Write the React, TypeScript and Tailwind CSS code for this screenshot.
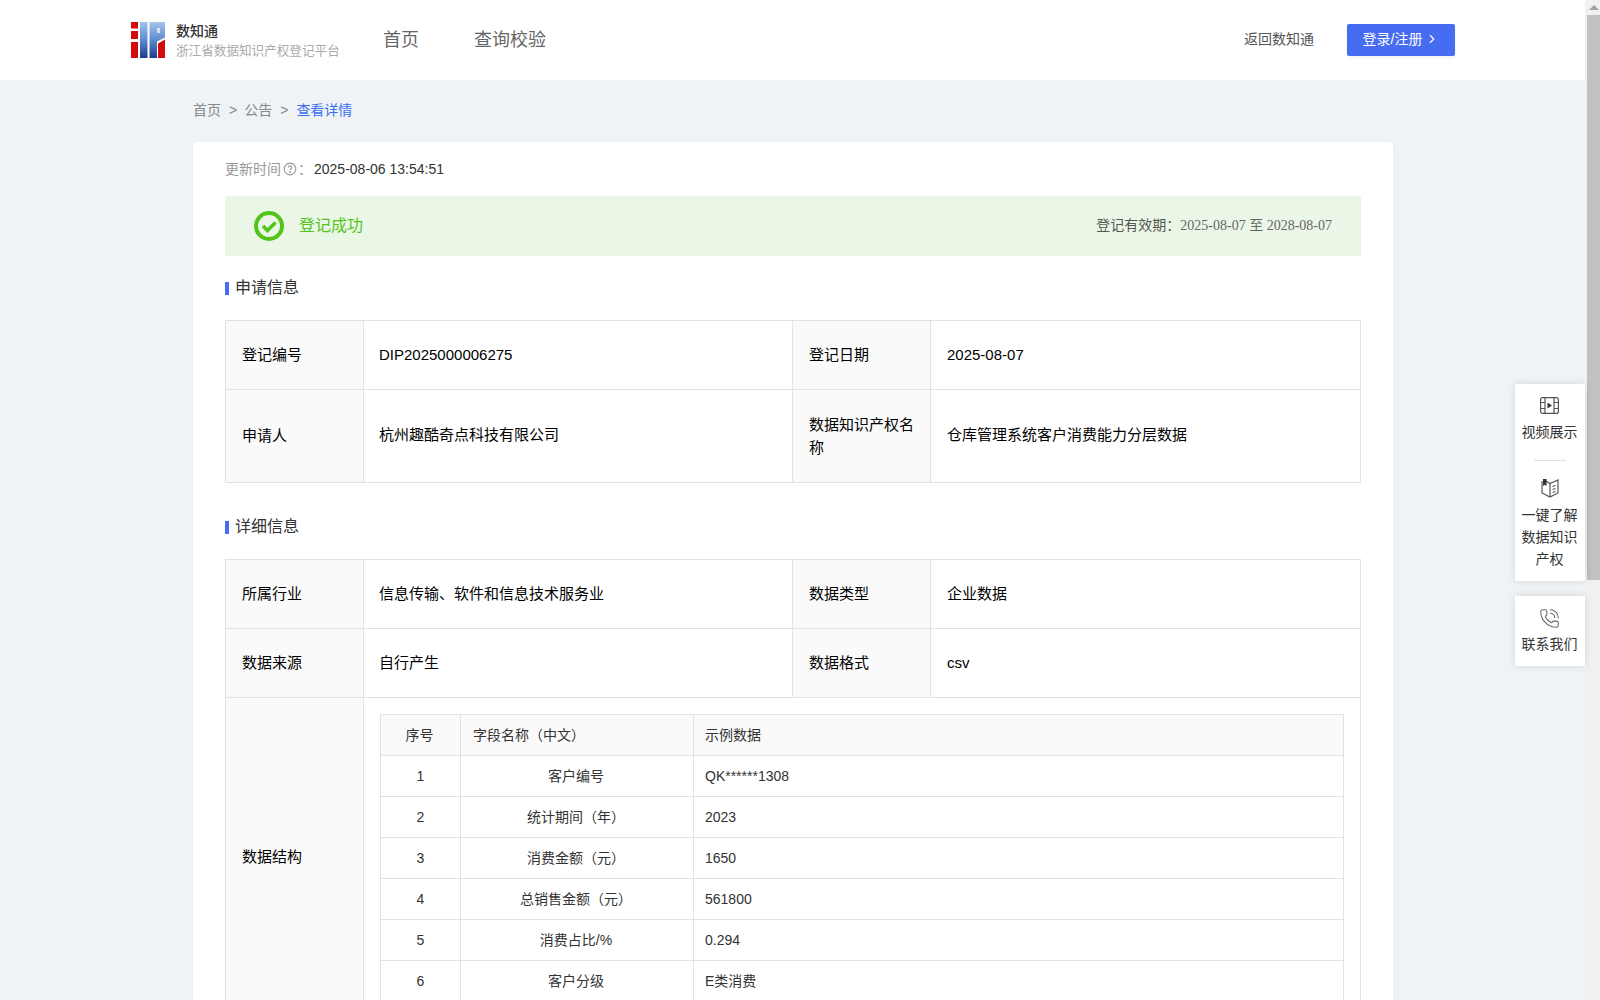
import { ChevronRight, PhoneCall } from 'lucide-react';

const fontStack = '[font-family:"Liberation_Sans","Noto_Sans_CJK_SC",sans-serif]';

const fields = [
  ['1', '客户编号', 'QK******1308'],
  ['2', '统计期间（年）', '2023'],
  ['3', '消费金额（元）', '1650'],
  ['4', '总销售金额（元）', '561800'],
  ['5', '消费占比/%', '0.294'],
  ['6', '客户分级', 'E类消费'],
];

function Logo() {
  return (
    <svg width="34" height="36" viewBox="0 0 34 36" className="shrink-0">
      <defs>
        <linearGradient id="logoBlue" x1="0" y1="0" x2="0" y2="36" gradientUnits="userSpaceOnUse">
          <stop offset="0" stopColor="#a5c4ea" />
          <stop offset="0.5" stopColor="#5f8bd0" />
          <stop offset="1" stopColor="#1d3a8c" />
        </linearGradient>
      </defs>
      <rect x="0" y="0" width="7" height="6.500" fill="#d40b0b" />
      <rect x="0" y="9" width="7" height="8" fill="#d40b0b" />
      <rect x="0" y="20" width="7" height="16" fill="#d40b0b" />
      <rect x="9" y="0" width="7.500" height="36" fill="url(#logoBlue)" />
      <path d="M18.500 0H34V15.500L26 19.500V36H18.500z" fill="url(#logoBlue)" />
      <rect x="26" y="6" width="3" height="5" fill="#d6e4f6" />
      <path d="M27 36V21.500L34 17.500V36z" fill="#d40b0b" />
    </svg>
  );
}

function SectionTitle({ text }: { text: string }) {
  return (
    <div className="flex items-center h-5 text-base text-[#333]">
      <span className="w-1 h-[13px] bg-[#466df1] mr-[6px] mt-[3px]" />
      <span className="pt-[2px]">{text}</span>
    </div>
  );
}

function Row({ cells, h, value = '' }: { cells: string[]; h: string; value?: string }) {
  return (
    <div className={`grid grid-cols-[137px_429px_138px_1fr] border-b border-[#e2e2e2] text-[15px] text-black ${h}`}>
      <div className="flex items-center bg-[#fafafa] pl-4 pr-3 pb-px leading-[23px]">{cells[0]}</div>
      <div className={`flex items-center border-l border-[#e2e2e2] pl-[15px] ${value}`}>{cells[1]}</div>
      <div className="flex items-center bg-[#fafafa] border-l border-[#e2e2e2] pl-4 pr-3 pb-px leading-[23px]">{cells[2]}</div>
      <div className={`flex items-center border-l border-[#e2e2e2] pl-4 ${value}`}>{cells[3]}</div>
    </div>
  );
}

function Side() {
  return (
    <div className="absolute right-[15px] top-[384px] w-[70px] flex flex-col gap-[15px] text-sm text-[#333]">
      <div className="bg-white shadow-[0_0_8px_rgba(0,0,0,0.12)] flex flex-col items-center pt-[13px] pb-[11px] pr-px">
        <svg width="19" height="17" viewBox="0 0 19 17" fill="none" stroke="#555" strokeWidth="1.2">
          <rect x="0.600" y="0.600" width="17.800" height="15.800" rx="2" />
          <path d="M5 1v15M14 1v15M1 5.500h4M1 11.500h4M14 5.500h4M14 11.500h4" />
          <path d="M7.500 5.500l4.500 3-4.500 3z" fill="#333" stroke="none" />
        </svg>
        <div className="mt-[7px] leading-[22px]">视频展示</div>
        <div className="w-8 h-px bg-[#e2e2e2] mt-[17px] mb-[17px]" />
        <svg width="20" height="20" viewBox="0 0 20 20" fill="none" stroke="#555" strokeWidth="1.2">
          <path d="M2 3v12l8 4 8-4V2l-8 3.500L4 2" />
          <path d="M10 5.500V19M12.500 8.500l3-1M12.500 11.500l3-1M12.500 14.500l3-1" />
          <path d="M3 1h3.500v7L4.800 6.800 3 8z" fill="#333" stroke="none" />
        </svg>
        <div className="mt-[6px] leading-[22px] text-center px-[6px]">一键了解数据知识产权</div>
      </div>
      <div className="bg-white shadow-[0_0_8px_rgba(0,0,0,0.12)] flex flex-col items-center pt-[12px] pb-[11px] pr-px">
        <PhoneCall size={21} strokeWidth={1.2} color="#666" />
        <div className="mt-[4px] leading-[22px]">联系我们</div>
      </div>
    </div>
  );
}

export default function App() {
  return (
    <div className={`relative flex h-screen overflow-hidden bg-[#eff3f6] ${fontStack}`}>
      <div className="w-[1585px] shrink-0 overflow-hidden">
        <header className="h-20 bg-white flex items-center pl-[131px] pr-[130px]">
          <Logo />
          <div className="ml-[11px] w-[190px]">
            <div className="text-sm font-medium text-[#333] leading-5">数知通</div>
            <div className="text-[12.600px] text-[#aaa] leading-[18px] mt-px">浙江省数据知识产权登记平台</div>
          </div>
          <nav className="flex gap-[55px] text-lg text-[#666] ml-[17px]">
            <span>首页</span>
            <span>查询校验</span>
          </nav>
          <div className="ml-auto flex items-center gap-[33px]">
            <span className="text-sm text-[#555] pb-[2px]">返回数知通</span>
            <button className="w-[108px] h-8 rounded-[2px] bg-[#466df1] text-white text-sm pb-[2px] flex items-center justify-center gap-[3px] shadow-[0_2px_4px_rgba(0,0,0,0.06)]">
              登录/注册 <ChevronRight size={14} />
            </button>
          </div>
        </header>

        <main className="w-[1200px] ml-[193px]">
          <div className="h-[62px] flex items-center gap-[8px] text-sm text-[#888] pb-[2px]">
            <span>首页</span>
            <span className="-mr-px">&gt;</span>
            <span>公告</span>
            <span>&gt;</span>
            <span className="text-[#3b6ff2]">查看详情</span>
          </div>

          <div className="bg-white rounded-[4px] px-8 pt-[17px] pb-8">
            <div className="h-5 flex items-center text-sm text-[#999]">
              更新时间
              <svg width="14" height="14" viewBox="0 0 14 14" fill="none" stroke="#999" className="ml-[2px]">
                <circle cx="7" cy="7" r="5.800" strokeWidth="1.2" />
                <path d="M5.300 5.500c0-2.200 3.500-2.200 3.500 0 0 1.300-1.700 1.300-1.700 2.600" strokeWidth="1.100" />
                <circle cx="7" cy="10" r="0.500" fill="#999" />
              </svg>
              <span className="ml-[1px]">：</span>
              <span className="text-[#333] ml-[2px]">2025-08-06 13:54:51</span>
            </div>

            <div className="mt-[17px] h-[60px] bg-[#ebf7e6] flex items-center justify-between pl-[29px] pr-[29px]">
              <div className="flex items-center">
                <svg width="30" height="30" viewBox="0 0 30 30" fill="none" stroke="#52c41a">
                  <circle cx="15" cy="15" r="13" strokeWidth="4" />
                  <path d="M9 15l4.500 4.500L21.500 11.500" strokeWidth="3.500" />
                </svg>
                <span className="ml-[15px] text-base text-[#52c41a]">登记成功</span>
              </div>
              <div className="text-sm text-[#555] pb-px">
                登记有效期：<span className="[font-family:'Liberation_Serif','Noto_Sans_CJK_SC',serif] text-[#666]">2025-08-07 至 2028-08-07</span>
              </div>
            </div>

            <div className="mt-[21px]">
              <SectionTitle text="申请信息" />
            </div>
            <div className="mt-[23px] border border-b-0 border-[#e2e2e2]">
              <Row h="h-[69px]" cells={['登记编号', 'DIP2025000006275', '登记日期', '2025-08-07']} />
              <Row h="h-[93px]" value="pb-px" cells={['申请人', '杭州趣酷奇点科技有限公司', '数据知识产权名称', '仓库管理系统客户消费能力分层数据']} />
            </div>

            <div className="mt-[33px]">
              <SectionTitle text="详细信息" />
            </div>
            <div className="mt-[23px] border border-b-0 border-[#e2e2e2]">
              <Row h="h-[69px]" cells={['所属行业', '信息传输、软件和信息技术服务业', '数据类型', '企业数据']} />
              <Row h="h-[69px]" cells={['数据来源', '自行产生', '数据格式', 'csv']} />
              <div className="grid grid-cols-[137px_1fr] text-[15px] text-black border-b border-[#e2e2e2]">
                <div className="flex items-center bg-[#fafafa] pl-4 pb-px">数据结构</div>
                <div className="border-l border-[#e2e2e2] pt-4 px-4 pb-4 text-sm">
                  <div className="border border-b-0 border-[#e2e2e2] text-[#333]">
                    <div className="grid grid-cols-[79px_233px_1fr] h-[41px] bg-[#fafafa] border-b border-[#e2e2e2] items-stretch">
                      <div className="flex items-center justify-center pr-[2px]">序号</div>
                      <div className="flex items-center pl-3 border-l border-[#e2e2e2]">字段名称（中文）</div>
                      <div className="flex items-center pl-[11px] border-l border-[#e2e2e2]">示例数据</div>
                    </div>
                    {fields.map(f => (
                      <div key={f[0]} className="grid grid-cols-[79px_233px_1fr] h-[41px] border-b border-[#e2e2e2]">
                        <div className="flex items-center justify-center">{f[0]}</div>
                        <div className="flex items-center justify-center border-l border-[#e2e2e2] pr-[2px]">{f[1]}</div>
                        <div className="flex items-center pl-[11px] border-l border-[#e2e2e2]">{f[2]}</div>
                      </div>
                    ))}
                  </div>
                </div>
              </div>
            </div>
          </div>
        </main>
      </div>

      <Side />

      {/* scrollbar */}
      <div className="w-[15px] h-full bg-[#f1f1f1] flex flex-col items-center pl-[2px]">
        <div className="h-[15px] flex items-center justify-center">
          <div className="w-0 h-0 border-x-[5px] border-x-transparent border-b-[5px] border-b-[#a3a3a3]" />
        </div>
        <div className="w-full h-[565px] bg-[#c1c1c1]" />
      </div>
    </div>
  );
}
